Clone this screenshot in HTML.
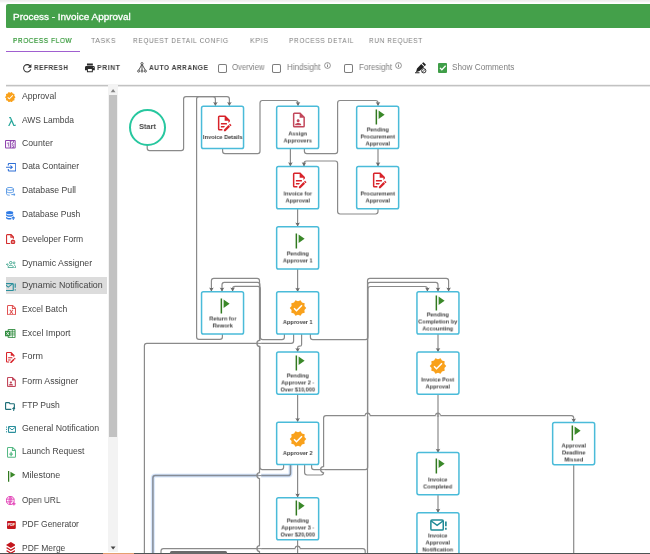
<!DOCTYPE html>
<html lang="en"><head><meta charset="utf-8"><title>Process - Invoice Approval</title>
<style>
html,body{margin:0;padding:0}
body{width:650px;height:554px;overflow:hidden;background:#fff;position:relative;font-family:"Liberation Sans",sans-serif}
.t{position:absolute;white-space:nowrap;transform-origin:0 50%;will-change:transform}
.ic{position:absolute;overflow:visible}
.topband{position:absolute;left:0;top:0;width:650px;height:3px;background:linear-gradient(#ececec,#f3f3f3 60%,#fff)}
.green{position:absolute;left:5.600px;top:4.200px;width:650px;height:23.600px;background:#44a04a;border-top-left-radius:2px;border-bottom-left-radius:1px}
.ul{position:absolute;left:5.800px;top:50.900px;width:74.400px;height:1.100px;background:#a05fd0}
.cb{position:absolute;width:6.900px;height:6.900px;box-shadow:0 0 0 1px #7d7d7d;border-radius:0.800px;background:#fff;margin:1px}
.cbg{position:absolute;width:9.400px;height:9.400px;background:#3f9e48;border-radius:1px}
.cbg svg{display:block}
.shadow{position:absolute;left:5.800px;top:83.500px;width:650px;height:3.200px;background:linear-gradient(rgba(0,0,0,0),rgba(0,0,0,.10) 35%,rgba(0,0,0,.35) 62%,rgba(0,0,0,.12) 80%,rgba(0,0,0,0))}
.side{position:absolute;left:0;top:0;width:120px;height:554px}
.hl{position:absolute;left:5.800px;top:276.800px;width:101.600px;height:17.600px;background:#dcdcdc}
.sbtrack{position:absolute;left:108.100px;top:83.800px;width:10.300px;height:468.200px;background:#f3f3f3}
.sbthumb{position:absolute;left:109px;top:95px;width:8.200px;height:341.500px;background:#c2c2c2}

.dg{position:absolute;left:0;top:0}
.node{position:absolute;width:43.500px;height:43.700px}
.node svg{position:absolute;left:12.750px;overflow:visible}
.lbl{position:absolute;left:-10px;width:63.500px;font-size:6.250px;line-height:6.900px;font-weight:700;color:#404040;text-align:center;white-space:nowrap;transform:scaleX(.9);will-change:transform}
.start{position:absolute;box-sizing:border-box;left:128.500px;top:108.700px;width:37.200px;height:37.200px;border:2.100px solid #27c79f;border-radius:50%;background:#fff}
.hthumb{position:absolute;left:170px;top:551.200px;width:57px;height:3px;background:#6a6a6a;border-radius:1.500px 1.500px 0 0}
.bline{position:absolute;left:0;top:552.800px;width:650px;height:1.200px;background:#4e5454}
.borange{position:absolute;left:103px;top:552.800px;width:30.500px;height:1.200px;background:#e5a070}
</style></head><body>
<svg class="dg" width="650" height="554" viewBox="0 0 650 554"><path d="M147.20 145.00 L147.20 148.20 Q147.20 150.60 149.60 150.60 L181.20 150.60 Q183.60 150.60 183.60 148.20 L183.60 99.10 Q183.60 96.70 186.00 96.70 L227.00 96.70 Q229.40 96.70 229.40 99.10 L229.40 105.60" fill="none" stroke="#8a8a8a" stroke-width="1.20"/>
<path d="M229.40 106.00 l-2.300 -4.100 q2.300 1.100 4.600 0z" fill="#6c6c6c"/>
<path d="M222.40 334.00 L222.40 337.00 Q222.40 339.40 220.00 339.40 L199.00 339.40 Q196.60 339.40 196.60 337.00 L196.60 99.10 Q196.60 96.70 199.00 96.70 L213.00 96.70 Q215.40 96.70 215.40 99.10 L215.40 105.60" fill="none" stroke="#8a8a8a" stroke-width="1.20"/>
<path d="M215.40 106.00 l-2.300 -4.100 q2.300 1.100 4.600 0z" fill="#6c6c6c"/>
<path d="M222.60 148.40 L222.60 151.20 Q222.60 153.60 225.00 153.60 L257.60 153.60 Q260.00 153.60 260.00 151.20 L260.00 102.90 Q260.00 100.50 262.40 100.50 L295.60 100.50 Q298.00 100.50 298.00 102.90 L298.00 105.60" fill="none" stroke="#8a8a8a" stroke-width="1.20"/>
<path d="M298.00 106.00 l-2.300 -4.100 q2.300 1.100 4.600 0z" fill="#6c6c6c"/>
<path d="M290.40 148.40 L290.40 166.00" fill="none" stroke="#8a8a8a" stroke-width="1.20"/>
<path d="M290.40 166.40 l-2.300 -4.100 q2.300 1.100 4.600 0z" fill="#6c6c6c"/>
<path d="M304.40 148.40 L304.40 151.20 Q304.40 153.60 306.80 153.60 L335.20 153.60 Q337.60 153.60 337.60 151.20 L337.60 102.90 Q337.60 100.50 340.00 100.50 L375.60 100.50 Q378.00 100.50 378.00 102.90 L378.00 105.60" fill="none" stroke="#8a8a8a" stroke-width="1.20"/>
<path d="M378.00 106.00 l-2.300 -4.100 q2.300 1.100 4.600 0z" fill="#6c6c6c"/>
<path d="M378.00 148.40 L378.00 166.00" fill="none" stroke="#8a8a8a" stroke-width="1.20"/>
<path d="M378.00 166.40 l-2.300 -4.100 q2.300 1.100 4.600 0z" fill="#6c6c6c"/>
<path d="M378.00 208.40 L378.00 211.60 Q378.00 214.00 375.60 214.00 L340.00 214.00 Q337.60 214.00 337.60 211.60 L337.60 163.40 Q337.60 161.00 335.20 161.00 L306.40 161.00 Q304.00 161.00 304.00 163.40 L304.00 166.00" fill="none" stroke="#8a8a8a" stroke-width="1.20"/>
<path d="M304.00 166.40 l-2.300 -4.100 q2.300 1.100 4.600 0z" fill="#6c6c6c"/>
<path d="M297.60 208.40 L297.60 226.20" fill="none" stroke="#8a8a8a" stroke-width="1.20"/>
<path d="M297.60 226.60 l-2.300 -4.100 q2.300 1.100 4.600 0z" fill="#6c6c6c"/>
<path d="M297.60 268.80 L297.60 291.50" fill="none" stroke="#8a8a8a" stroke-width="1.20"/>
<path d="M297.60 291.90 l-2.300 -4.100 q2.300 1.100 4.600 0z" fill="#6c6c6c"/>
<path d="M293.60 334.00 L293.60 341.00 Q293.60 343.40 291.20 343.40 L146.80 343.40 Q144.40 343.40 144.40 345.80 L144.40 560.00" fill="none" stroke="#8a8a8a" stroke-width="1.20"/>
<path d="M290.50 464.00 L290.50 473.20 Q290.50 475.60 288.10 475.60 L155.30 475.60 Q152.90 475.60 152.90 478.00 L152.90 560.00" fill="none" stroke="#e4eefc" stroke-width="4.400"/>
<path d="M290.50 464.00 L290.50 473.20 Q290.50 475.60 288.10 475.60 L155.30 475.60 Q152.90 475.60 152.90 478.00 L152.90 560.00" fill="none" stroke="#cfe0f9" stroke-width="3"/>
<path d="M290.50 464.00 L290.50 473.20 Q290.50 475.60 288.10 475.60 L155.30 475.60 Q152.90 475.60 152.90 478.00 L152.90 560.00" fill="none" stroke="#868c95" stroke-width="1.50"/>
<path d="M161.00 560.00 L161.00 551.00 Q161.00 548.60 163.40 548.60 L362.80 548.60 Q365.20 548.60 365.20 551.00 L365.20 560.00" fill="none" stroke="#8a8a8a" stroke-width="1.20"/>
<path d="M284.40 334.00 L284.40 337.20 Q284.40 339.60 282.00 339.60 L262.70 339.60 Q260.30 339.60 260.30 337.20 L260.30 288.80 Q260.30 286.40 257.90 286.40 L235.00 286.40 Q232.60 286.40 232.60 288.80 L232.60 291.20" fill="none" stroke="#8a8a8a" stroke-width="1.20"/>
<path d="M232.60 291.60 l-2.300 -4.100 q2.300 1.100 4.600 0z" fill="#6c6c6c"/>
<path d="M283.60 464.00 L283.60 467.20 Q283.60 469.60 281.20 469.60 L262.30 469.60 Q259.90 469.60 259.90 467.20 L259.90 284.80 Q259.90 282.40 257.50 282.40 L224.40 282.40 Q222.00 282.40 222.00 284.80 L222.00 291.20" fill="none" stroke="#8a8a8a" stroke-width="1.20"/>
<path d="M222.00 291.60 l-2.300 -4.100 q2.300 1.100 4.600 0z" fill="#6c6c6c"/>
<path d="M259.50 560.00 L259.50 280.80 Q259.50 278.40 257.10 278.40 L213.80 278.40 Q211.40 278.40 211.40 280.80 L211.40 291.20" fill="none" stroke="#8a8a8a" stroke-width="1.20"/>
<path d="M211.40 291.60 l-2.300 -4.100 q2.300 1.100 4.600 0z" fill="#6c6c6c"/>
<rect x="258.60" y="340.70" width="2.600" height="5.400" fill="#fff"/>
<path d="M258.30 343.40 h3.200" fill="none" stroke="#8a8a8a" stroke-width="1.050"/>
<path d="M259.90 340.40 a3 3 0 0 0 0 6" fill="none" stroke="#8a8a8a" stroke-width="1.300"/>
<rect x="258.60" y="472.90" width="2.600" height="5.400" fill="#fff"/>
<path d="M258.30 475.60 h3.200" fill="none" stroke="#868c95" stroke-width="1.050"/>
<path d="M259.90 472.60 a3 3 0 0 0 0 6" fill="none" stroke="#8a8a8a" stroke-width="1.300"/>
<rect x="258.60" y="545.90" width="2.600" height="5.400" fill="#fff"/>
<path d="M258.30 548.60 h3.200" fill="none" stroke="#8a8a8a" stroke-width="1.050"/>
<path d="M259.90 545.60 a3 3 0 0 0 0 6" fill="none" stroke="#8a8a8a" stroke-width="1.300"/>
<path d="M301.60 334.00 L301.60 344.40 Q301.60 346.20 299.80 346.20 L299.40 346.20 Q297.60 346.20 297.60 348.00 L297.60 351.60" fill="none" stroke="#8a8a8a" stroke-width="1.20"/>
<path d="M297.60 352.00 l-2.300 -4.100 q2.300 1.100 4.600 0z" fill="#6c6c6c"/>
<path d="M310.40 334.00 L310.40 337.20 Q310.40 339.60 312.80 339.60 L365.50 339.60 Q367.90 339.60 367.90 337.20 L367.90 288.90 Q367.90 286.50 370.30 286.50 L425.05 286.50 Q427.40 286.50 427.40 288.85 L427.40 291.20" fill="none" stroke="#8a8a8a" stroke-width="1.20"/>
<path d="M427.40 291.60 l-2.300 -4.100 q2.300 1.100 4.600 0z" fill="#6c6c6c"/>
<path d="M297.60 394.60 L297.60 421.60" fill="none" stroke="#8a8a8a" stroke-width="1.20"/>
<path d="M297.60 422.00 l-2.300 -4.100 q2.300 1.100 4.600 0z" fill="#6c6c6c"/>
<path d="M297.60 464.00 L297.60 497.20" fill="none" stroke="#8a8a8a" stroke-width="1.20"/>
<path d="M297.60 497.60 l-2.300 -4.100 q2.300 1.100 4.600 0z" fill="#6c6c6c"/>
<path d="M297.60 539.40 L297.60 560.00" fill="none" stroke="#8a8a8a" stroke-width="1.20"/>
<rect x="295.20" y="547.60" width="4.800" height="2" fill="#fff"/>
<path d="M295.20 548.60 a2.400 2.400 0 0 1 4.800 0" fill="none" stroke="#8a8a8a" stroke-width="1.200"/>
<path d="M297.60 546.10 v4" fill="none" stroke="#8a8a8a" stroke-width="1.050"/>
<path d="M311.60 464.00 L311.60 467.20 Q311.60 469.60 314.00 469.60 L365.30 469.60 Q367.70 469.60 367.70 467.20 L367.70 284.80 Q367.70 282.40 370.10 282.40 L435.60 282.40 Q438.00 282.40 438.00 284.80 L438.00 291.20" fill="none" stroke="#8a8a8a" stroke-width="1.20"/>
<path d="M438.00 291.60 l-2.300 -4.100 q2.300 1.100 4.600 0z" fill="#6c6c6c"/>
<path d="M367.50 560.00 L367.50 280.80 Q367.50 278.40 369.90 278.40 L446.20 278.40 Q448.60 278.40 448.60 280.80 L448.60 291.20" fill="none" stroke="#8a8a8a" stroke-width="1.20"/>
<path d="M448.60 291.60 l-2.300 -4.100 q2.300 1.100 4.600 0z" fill="#6c6c6c"/>
<path d="M304.60 464.00 L304.60 472.60 Q304.60 475.00 307.00 475.00 L321.20 475.00 Q323.60 475.00 323.60 472.60 L323.60 418.00 Q323.60 415.60 326.00 415.60 L571.30 415.60 Q573.70 415.60 573.70 418.00 L573.70 422.20" fill="none" stroke="#8a8a8a" stroke-width="1.20"/>
<path d="M573.70 422.60 l-2.300 -4.100 q2.300 1.100 4.600 0z" fill="#6c6c6c"/>
<rect x="322.30" y="466.90" width="2.600" height="5.400" fill="#fff"/>
<path d="M322.00 469.60 h3.200" fill="none" stroke="#8a8a8a" stroke-width="1.050"/>
<path d="M323.60 466.60 a3 3 0 0 0 0 6" fill="none" stroke="#8a8a8a" stroke-width="1.300"/>
<rect x="365.20" y="414.60" width="4.800" height="2" fill="#fff"/>
<path d="M365.20 415.60 a2.400 2.400 0 0 1 4.800 0" fill="none" stroke="#8a8a8a" stroke-width="1.200"/>
<path d="M367.60 413.10 v4" fill="none" stroke="#8a8a8a" stroke-width="1.050"/>
<rect x="435.60" y="414.60" width="4.800" height="2" fill="#fff"/>
<path d="M435.60 415.60 a2.400 2.400 0 0 1 4.800 0" fill="none" stroke="#8a8a8a" stroke-width="1.200"/>
<path d="M438.00 413.10 v4" fill="none" stroke="#8a8a8a" stroke-width="1.050"/>
<path d="M438.00 334.00 L438.00 351.60" fill="none" stroke="#8a8a8a" stroke-width="1.20"/>
<path d="M438.00 352.00 l-2.300 -4.100 q2.300 1.100 4.600 0z" fill="#6c6c6c"/>
<path d="M438.00 394.20 L438.00 452.40" fill="none" stroke="#8a8a8a" stroke-width="1.20"/>
<path d="M438.00 452.80 l-2.300 -4.100 q2.300 1.100 4.600 0z" fill="#6c6c6c"/>
<path d="M438.00 494.60 L438.00 512.40" fill="none" stroke="#8a8a8a" stroke-width="1.20"/>
<path d="M438.00 512.80 l-2.300 -4.100 q2.300 1.100 4.600 0z" fill="#6c6c6c"/>
<path d="M573.70 464.40 L573.70 560.00" fill="none" stroke="#8a8a8a" stroke-width="1.20"/>
<rect x="201.55" y="106.35" width="42.00" height="42.20" rx="1.800" fill="#fff" stroke="#4abbd9" stroke-width="1.50"/>
<rect x="276.65" y="106.35" width="42.00" height="42.20" rx="1.800" fill="#fff" stroke="#4abbd9" stroke-width="1.50"/>
<rect x="356.65" y="106.35" width="42.00" height="42.20" rx="1.800" fill="#fff" stroke="#4abbd9" stroke-width="1.50"/>
<rect x="276.65" y="166.55" width="42.00" height="42.20" rx="1.800" fill="#fff" stroke="#4abbd9" stroke-width="1.50"/>
<rect x="356.65" y="166.55" width="42.00" height="42.20" rx="1.800" fill="#fff" stroke="#4abbd9" stroke-width="1.50"/>
<rect x="276.65" y="226.75" width="42.00" height="42.20" rx="1.800" fill="#fff" stroke="#4abbd9" stroke-width="1.50"/>
<rect x="201.55" y="291.75" width="42.00" height="42.20" rx="1.800" fill="#fff" stroke="#4abbd9" stroke-width="1.50"/>
<rect x="276.65" y="291.75" width="42.00" height="42.20" rx="1.800" fill="#fff" stroke="#4abbd9" stroke-width="1.50"/>
<rect x="416.95" y="291.75" width="42.00" height="42.20" rx="1.800" fill="#fff" stroke="#4abbd9" stroke-width="1.50"/>
<rect x="276.65" y="351.95" width="42.00" height="42.20" rx="1.800" fill="#fff" stroke="#4abbd9" stroke-width="1.50"/>
<rect x="416.95" y="351.95" width="42.00" height="42.20" rx="1.800" fill="#fff" stroke="#4abbd9" stroke-width="1.50"/>
<rect x="276.65" y="422.25" width="42.00" height="42.20" rx="1.800" fill="#fff" stroke="#4abbd9" stroke-width="1.50"/>
<rect x="552.65" y="422.45" width="42.00" height="42.20" rx="1.800" fill="#fff" stroke="#4abbd9" stroke-width="1.50"/>
<rect x="416.95" y="452.45" width="42.00" height="42.20" rx="1.800" fill="#fff" stroke="#4abbd9" stroke-width="1.50"/>
<rect x="276.65" y="497.65" width="42.00" height="42.20" rx="1.800" fill="#fff" stroke="#4abbd9" stroke-width="1.50"/>
<rect x="416.95" y="512.75" width="42.00" height="42.20" rx="1.800" fill="#fff" stroke="#4abbd9" stroke-width="1.50"/></svg>
<div class="node" style="left:200.80px;top:105.60px"><svg style="top:8.40px" width="18" height="18" viewBox="0 0 24 24"><g transform="translate(1.2 0)"><path fill="#d8232a" d="M8,12H16V14H8V12M10,20H6V4H13V9H18V12.1L20,10.1V8L14,2H6A2,2 0 0,0 4,4V20A2,2 0 0,0 6,22H10V20M8,18H12.1L13,17.1V16H8V18M20.2,13C20.3,13 20.5,13.1 20.6,13.2L21.9,14.5C22.1,14.7 22.1,15.1 21.9,15.3L20.9,16.3L18.8,14.2L19.8,13.2C19.9,13.1 20,13 20.2,13M20.2,16.9L14.1,23H12V20.9L18.1,14.8L20.2,16.9Z"/></g></svg><div class="lbl" style="top:28.45px">Invoice Details</div></div>
<div class="node" style="left:275.90px;top:105.60px"><svg style="top:5.60px" width="18" height="18" viewBox="0 0 24 24"><g transform="translate(1.2 0)"><path fill="#c2475b" d="M14,2H6A2,2 0 0,0 4,4V20A2,2 0 0,0 6,22H18A2,2 0 0,0 20,20V8L14,2M18,20H6V4H13V9H18V20M13,13C13,14.1 12.1,15 11,15C9.9,15 9,14.1 9,13C9,11.9 9.9,11 11,11C12.1,11 13,11.9 13,13M15,18V19H7V18C7,16.67 9.67,16 11,16C12.33,16 15,16.67 15,18Z"/></g></svg><div class="lbl" style="top:24.40px;transform:translateY(0.5px) scaleX(.9)">Assign<br>Approvers</div></div>
<div class="node" style="left:355.90px;top:105.60px"><svg style="top:2.50px" width="18" height="18" viewBox="0 0 24 24"><g transform="translate(1.800 0)"><path fill="#31791f" d="M7,2H9V22H7V2Z"/><path fill="#3a8829" d="M19,9L11,14.6V3.4L19,9Z"/></g></svg><div class="lbl" style="top:21.35px;transform:translateY(-0.5px) scaleX(.9)">Pending<br>Procurement<br>Approval</div></div>
<div class="node" style="left:275.90px;top:165.80px"><svg style="top:5.60px" width="18" height="18" viewBox="0 0 24 24"><g transform="translate(1.2 0)"><path fill="#d8232a" d="M8,12H16V14H8V12M10,20H6V4H13V9H18V12.1L20,10.1V8L14,2H6A2,2 0 0,0 4,4V20A2,2 0 0,0 6,22H10V20M8,18H12.1L13,17.1V16H8V18M20.2,13C20.3,13 20.5,13.1 20.6,13.2L21.9,14.5C22.1,14.7 22.1,15.1 21.9,15.3L20.9,16.3L18.8,14.2L19.8,13.2C19.9,13.1 20,13 20.2,13M20.2,16.9L14.1,23H12V20.9L18.1,14.8L20.2,16.9Z"/></g></svg><div class="lbl" style="top:24.40px;transform:translateY(0.5px) scaleX(.9)">Invoice for<br>Approval</div></div>
<div class="node" style="left:355.90px;top:165.80px"><svg style="top:5.60px" width="18" height="18" viewBox="0 0 24 24"><g transform="translate(1.2 0)"><path fill="#d8232a" d="M8,12H16V14H8V12M10,20H6V4H13V9H18V12.1L20,10.1V8L14,2H6A2,2 0 0,0 4,4V20A2,2 0 0,0 6,22H10V20M8,18H12.1L13,17.1V16H8V18M20.2,13C20.3,13 20.5,13.1 20.6,13.2L21.9,14.5C22.1,14.7 22.1,15.1 21.9,15.3L20.9,16.3L18.8,14.2L19.8,13.2C19.9,13.1 20,13 20.2,13M20.2,16.9L14.1,23H12V20.9L18.1,14.8L20.2,16.9Z"/></g></svg><div class="lbl" style="top:24.40px;transform:translateY(0.5px) scaleX(.9)">Procurement<br>Approval</div></div>
<div class="node" style="left:275.90px;top:226.00px"><svg style="top:5.60px" width="18" height="18" viewBox="0 0 24 24"><g transform="translate(1.800 0)"><path fill="#31791f" d="M7,2H9V22H7V2Z"/><path fill="#3a8829" d="M19,9L11,14.6V3.4L19,9Z"/></g></svg><div class="lbl" style="top:24.40px;transform:translateY(0.5px) scaleX(.9)">Pending<br>Approver 1</div></div>
<div class="node" style="left:200.80px;top:291.00px"><svg style="top:5.60px" width="18" height="18" viewBox="0 0 24 24"><g transform="translate(1.800 0)"><path fill="#31791f" d="M7,2H9V22H7V2Z"/><path fill="#3a8829" d="M19,9L11,14.6V3.4L19,9Z"/></g></svg><div class="lbl" style="top:24.40px;transform:translateY(0.5px) scaleX(.9)">Return for<br>Rework</div></div>
<div class="node" style="left:275.90px;top:291.00px"><svg style="top:8.40px" width="18" height="18" viewBox="0 0 24 24"><path fill="#f9a11b" d="M23,12L20.56,9.22L20.9,5.54L17.29,4.72L15.4,1.54L12,3L8.6,1.54L6.71,4.72L3.1,5.53L3.44,9.21L1,12L3.44,14.78L3.1,18.47L6.71,19.29L8.6,22.47L12,21L15.4,22.46L17.29,19.28L20.9,18.46L20.56,14.78L23,12M10,17L6,13L7.41,11.59L10,14.17L16.59,7.58L18,9L10,17Z"/></svg><div class="lbl" style="top:28.45px">Approver 1</div></div>
<div class="node" style="left:416.20px;top:291.00px"><svg style="top:2.50px" width="18" height="18" viewBox="0 0 24 24"><g transform="translate(1.800 0)"><path fill="#31791f" d="M7,2H9V22H7V2Z"/><path fill="#3a8829" d="M19,9L11,14.6V3.4L19,9Z"/></g></svg><div class="lbl" style="top:21.35px;transform:translateY(-0.5px) scaleX(.9)">Pending<br>Completion by<br>Accounting</div></div>
<div class="node" style="left:275.90px;top:351.20px"><svg style="top:2.50px" width="18" height="18" viewBox="0 0 24 24"><g transform="translate(1.800 0)"><path fill="#31791f" d="M7,2H9V22H7V2Z"/><path fill="#3a8829" d="M19,9L11,14.6V3.4L19,9Z"/></g></svg><div class="lbl" style="top:21.35px;transform:translateY(-0.5px) scaleX(.9)">Pending<br>Approver 2 -<br>Over $10,000</div></div>
<div class="node" style="left:416.20px;top:351.20px"><svg style="top:5.60px" width="18" height="18" viewBox="0 0 24 24"><path fill="#f9a11b" d="M23,12L20.56,9.22L20.9,5.54L17.29,4.72L15.4,1.54L12,3L8.6,1.54L6.71,4.72L3.1,5.53L3.44,9.21L1,12L3.44,14.78L3.1,18.47L6.71,19.29L8.6,22.47L12,21L15.4,22.46L17.29,19.28L20.9,18.46L20.56,14.78L23,12M10,17L6,13L7.41,11.59L10,14.17L16.59,7.58L18,9L10,17Z"/></svg><div class="lbl" style="top:24.40px;transform:translateY(0.5px) scaleX(.9)">Invoice Post<br>Approval</div></div>
<div class="node" style="left:275.90px;top:421.50px"><svg style="top:8.40px" width="18" height="18" viewBox="0 0 24 24"><path fill="#f9a11b" d="M23,12L20.56,9.22L20.9,5.54L17.29,4.72L15.4,1.54L12,3L8.6,1.54L6.71,4.72L3.1,5.53L3.44,9.21L1,12L3.44,14.78L3.1,18.47L6.71,19.29L8.6,22.47L12,21L15.4,22.46L17.29,19.28L20.9,18.46L20.56,14.78L23,12M10,17L6,13L7.41,11.59L10,14.17L16.59,7.58L18,9L10,17Z"/></svg><div class="lbl" style="top:28.45px">Approver 2</div></div>
<div class="node" style="left:551.90px;top:421.70px"><svg style="top:2.50px" width="18" height="18" viewBox="0 0 24 24"><g transform="translate(1.800 0)"><path fill="#31791f" d="M7,2H9V22H7V2Z"/><path fill="#3a8829" d="M19,9L11,14.6V3.4L19,9Z"/></g></svg><div class="lbl" style="top:21.35px;transform:translateY(-0.5px) scaleX(.9)">Approval<br>Deadline<br>Missed</div></div>
<div class="node" style="left:416.20px;top:451.70px"><svg style="top:5.60px" width="18" height="18" viewBox="0 0 24 24"><g transform="translate(1.800 0)"><path fill="#31791f" d="M7,2H9V22H7V2Z"/><path fill="#3a8829" d="M19,9L11,14.6V3.4L19,9Z"/></g></svg><div class="lbl" style="top:24.40px;transform:translateY(0.5px) scaleX(.9)">Invoice<br>Completed</div></div>
<div class="node" style="left:275.90px;top:496.90px"><svg style="top:2.50px" width="18" height="18" viewBox="0 0 24 24"><g transform="translate(1.800 0)"><path fill="#31791f" d="M7,2H9V22H7V2Z"/><path fill="#3a8829" d="M19,9L11,14.6V3.4L19,9Z"/></g></svg><div class="lbl" style="top:21.35px;transform:translateY(-0.5px) scaleX(.9)">Pending<br>Approver 3 -<br>Over $20,000</div></div>
<div class="node" style="left:416.20px;top:512.00px"><svg style="top:2.50px" width="18" height="18" viewBox="0 0 24 24"><rect x="2.500" y="6.500" width="16.500" height="13.500" rx="1.500" fill="none" stroke="#1f8a96" stroke-width="2"/><path d="M3 8l7.800 5.800 7.800-5.800" fill="none" stroke="#1f8a96" stroke-width="2"/><path d="M22.500 8.500v6.500M22.500 17v2.600" stroke="#1f8a96" stroke-width="2.200"/></svg><div class="lbl" style="top:21.35px;transform:translateY(-0.5px) scaleX(.9)">Invoice<br>Approval<br>Notification</div></div>
<div class="start"></div>
<span class="t" style="left:138.80px;top:121.60px;font-size:8.00px;line-height:9.60px;font-weight:700;color:#484848;letter-spacing:0.000px;transform:scaleX(0.9272);">Start</span>
<div class="side">
<div class="hl"></div>
<svg class="ic" style="left:5.30px;top:92.00px;overflow:hidden" width="10.50" height="10.30" viewBox="1.00 1.54 22.00 20.93" preserveAspectRatio="none"><path fill="#f9a11b" d="M23,12L20.56,9.22L20.9,5.54L17.29,4.72L15.4,1.54L12,3L8.6,1.54L6.71,4.72L3.1,5.53L3.44,9.21L1,12L3.44,14.78L3.1,18.47L6.71,19.29L8.6,22.47L12,21L15.4,22.46L17.29,19.28L20.9,18.46L20.56,14.78L23,12M10,17L6,13L7.41,11.59L10,14.17L16.59,7.58L18,9L10,17Z"/></svg>
<span class="t" style="left:21.95px;top:90.96px;font-size:8.40px;line-height:10.08px;font-weight:400;color:#454545;letter-spacing:0.000px;transform:scaleX(1.0330);">Approval</span>
<svg class="ic" style="left:7.80px;top:116.60px;overflow:hidden" width="8.00" height="9.40" viewBox="2.60 3.50 16.10 18.80" preserveAspectRatio="none"><path d="M5 3.5h3.2l7.2 15.8 2.600-.9.700 2.200-4.800 1.700-4.300-9.400-4.400 9.200H2.600l5.600-11.700L7 6H5z" fill="#26a69a"/></svg>
<span class="t" style="left:21.95px;top:114.96px;font-size:8.40px;line-height:10.08px;font-weight:400;color:#454545;letter-spacing:0.000px;transform:scaleX(1.0124);">AWS Lambda</span>
<svg class="ic" style="left:5.30px;top:140.20px;overflow:hidden" width="10.70" height="8.60" viewBox="2.00 4.00 20.00 16.00" preserveAspectRatio="none"><path fill="#8e44ad" d="M4,4H20A2,2 0 0,1 22,6V18A2,2 0 0,1 20,20H4A2,2 0 0,1 2,18V6A2,2 0 0,1 4,4M4,6V18H11V6H4M20,18V6H18.76C19,6.54 18.95,7.07 18.95,7.13C18.88,7.8 18.41,8.5 18.24,8.75L15.91,11.3L19.23,11.28L19.24,12.5L14.04,12.47L14,11.47C14,11.47 17.05,8.24 17.2,7.95C17.34,7.67 17.91,6 16.5,6C15.27,6.05 15.41,7.3 15.41,7.3L13.87,7.31C13.87,7.31 13.88,6.65 14.25,6H13V18H15.58L15.57,17.14L16.54,17.13C16.54,17.13 17.45,16.97 17.46,16.08C17.5,15.08 16.65,15.08 16.5,15.08C16.37,15.08 15.43,15.13 15.43,15.95H13.91C13.91,15.95 13.95,13.89 16.5,13.89C19.1,13.89 18.96,15.91 18.96,15.91C18.96,15.91 19,17.16 17.85,17.63L18.37,18H20M8.92,16H7.42V10.2L5.62,10.76V9.53L8.76,8.41H8.92V16Z"/></svg>
<span class="t" style="left:21.95px;top:137.96px;font-size:8.40px;line-height:10.08px;font-weight:400;color:#454545;letter-spacing:0.000px;transform:scaleX(1.0356);">Counter</span>
<svg class="ic" style="left:5.70px;top:163.20px;overflow:hidden" width="10.30" height="8.50" viewBox="1.00 2.30 22.20 19.40" preserveAspectRatio="none"><path d="M6 8V5a1.500 1.500 0 0 1 1.500-1.500h13A1.500 1.500 0 0 1 22 5v14a1.500 1.500 0 0 1-1.500 1.500h-13A1.500 1.500 0 0 1 6 19v-3" fill="none" stroke="#2f6fd6" stroke-width="2.400"/><path d="M1 12h13M10.500 8l4 4-4 4" fill="none" stroke="#2f6fd6" stroke-width="2.400"/></svg>
<span class="t" style="left:21.95px;top:160.96px;font-size:8.40px;line-height:10.08px;font-weight:400;color:#454545;letter-spacing:0.000px;transform:scaleX(1.0150);">Data Container</span>
<svg class="ic" style="left:6.30px;top:186.60px;overflow:hidden" width="9.50" height="9.10" viewBox="2.50 1.50 20.50 22.20" preserveAspectRatio="none"><ellipse cx="11" cy="6" rx="7.500" ry="3.500" fill="none" stroke="#4a90e2" stroke-width="2"/><path d="M3.500 6v12c0 2 3 3.500 7 3.500M18.500 6v7M3.500 12c0 2 3.500 3.500 7.500 3.500s5-.5 7.500-2" fill="none" stroke="#4a90e2" stroke-width="2"/><path d="M14 20h8M19 17l3 3-3 3" fill="none" stroke="#4a90e2" stroke-width="2"/></svg>
<span class="t" style="left:21.95px;top:184.96px;font-size:8.40px;line-height:10.08px;font-weight:400;color:#454545;letter-spacing:0.000px;transform:scaleX(1.0354);">Database Pull</span>
<svg class="ic" style="left:6.30px;top:210.60px;overflow:hidden" width="9.20" height="9.40" viewBox="2.50 1.50 21.50 22.50" preserveAspectRatio="none"><ellipse cx="11" cy="5.500" rx="8.500" ry="4" fill="#2f7be5"/><path d="M2.500 8.500c1.500 2 5 3 8.500 3s7-1 8.500-3v4c-1.500 2-5 3-8.500 3s-7-1-8.500-3zM2.500 15c1.500 2 5 3 8.500 3 1.500 0 3-.2 4-.5v4c-1 .3-2.500.5-4 .5-3.500 0-7-1-8.500-3z" fill="#2f7be5"/><path d="M19.500 24v-8M16 19l3.500-3.500L23 19" fill="none" stroke="#2f7be5" stroke-width="2.400"/></svg>
<span class="t" style="left:21.95px;top:208.96px;font-size:8.40px;line-height:10.08px;font-weight:400;color:#454545;letter-spacing:0.000px;transform:scaleX(1.0176);">Database Push</span>
<svg class="ic" style="left:6.30px;top:233.60px;overflow:hidden" width="9.50" height="10.60" viewBox="2.80 1.30 20.70 22.20" preserveAspectRatio="none"><path d="M12 21.500H5.500A1.500 1.500 0 0 1 4 20V4a1.500 1.500 0 0 1 1.500-1.500H14l5 5V11M13.500 3v5h5" fill="none" stroke="#d32f2f" stroke-width="2.400"/><circle cx="18" cy="18" r="3.200" fill="none" stroke="#d32f2f" stroke-width="2.600"/><path d="M18 12.500v11M12.500 18h11M14 14l8 8M22 14l-8 8" stroke="#d32f2f" stroke-width="1.600"/><circle cx="18" cy="18" r="1.500" fill="#fff"/></svg>
<span class="t" style="left:21.95px;top:233.96px;font-size:8.40px;line-height:10.08px;font-weight:400;color:#454545;letter-spacing:0.000px;transform:scaleX(1.0187);">Developer Form</span>
<svg class="ic" style="left:5.70px;top:261.00px;overflow:hidden" width="10.10" height="7.00" viewBox="0.00 4.00 24.50 17.00" preserveAspectRatio="none"><circle cx="11.500" cy="8" r="3" fill="none" stroke="#2e9e83" stroke-width="2"/><circle cx="19.500" cy="8.500" r="2.300" fill="none" stroke="#2e9e83" stroke-width="1.800"/><path d="M5 20c0-4 3-5.500 6.500-5.500s6.500 1.500 6.500 5.500zM19.500 14c2.500.3 4 1.800 4 5.800h-3" fill="none" stroke="#2e9e83" stroke-width="2"/><path d="M0 12.500h4M2.500 9.500l3 3-3 3" stroke="#2e9e83" stroke-width="1.800" fill="none"/></svg>
<span class="t" style="left:21.95px;top:257.96px;font-size:8.40px;line-height:10.08px;font-weight:400;color:#454545;letter-spacing:0.000px;transform:scaleX(1.0465);">Dynamic Assigner</span>
<svg class="ic" style="left:6.00px;top:282.50px;overflow:hidden" width="9.80" height="8.20" viewBox="0.00 3.70 22.30 17.60" preserveAspectRatio="none"><path d="M-4 5h19a1.500 1.500 0 0 1 1.500 1.500v12A1.500 1.500 0 0 1 15 20H-4" fill="none" stroke="#2a8f9c" stroke-width="2.600"/><path d="M-4 5.500l9 7 10-7" fill="none" stroke="#2a8f9c" stroke-width="2.400"/><path d="M21 5v9M21 17v3" stroke="#2a8f9c" stroke-width="2.600"/></svg>
<span class="t" style="left:21.95px;top:279.96px;font-size:8.40px;line-height:10.08px;font-weight:400;color:#454545;letter-spacing:0.000px;transform:scaleX(1.0573);">Dynamic Notification</span>
<svg class="ic" style="left:7.00px;top:304.50px;overflow:hidden" width="9.00" height="10.30" viewBox="3.00 1.50 17.50 21.00" preserveAspectRatio="none"><path d="M5.500 2.500H14l5.500 5.500v12a1.500 1.500 0 0 1-1.500 1.500H5.500A1.500 1.500 0 0 1 4 20V4a1.500 1.500 0 0 1 1.500-1.500zM13.500 3v5.500h5.500" fill="none" stroke="#e05252" stroke-width="2"/><path d="M8.500 11l6 9M14.500 11l-6 9" stroke="#e05252" stroke-width="2"/></svg>
<span class="t" style="left:21.95px;top:303.96px;font-size:8.40px;line-height:10.08px;font-weight:400;color:#454545;letter-spacing:0.000px;transform:scaleX(1.0247);">Excel Batch</span>
<svg class="ic" style="left:5.30px;top:328.90px;overflow:hidden" width="10.50" height="9.10" viewBox="0.00 2.00 23.00 20.00" preserveAspectRatio="none"><path d="M7 3h15v18H7z" fill="none" stroke="#2e8b3d" stroke-width="2"/><path d="M12 7h10M12 11h10M12 15h10M16 3v18" stroke="#2e8b3d" stroke-width="1.600"/><rect x="0" y="6" width="12" height="12" fill="#2e8b3d"/><path d="M3 8.500l6 7M9 8.500l-6 7" stroke="#fff" stroke-width="1.800"/></svg>
<span class="t" style="left:21.95px;top:327.96px;font-size:8.40px;line-height:10.08px;font-weight:400;color:#454545;letter-spacing:0.000px;transform:scaleX(1.0422);">Excel Import</span>
<svg class="ic" style="left:6.30px;top:351.90px;overflow:hidden" width="9.60" height="11.10" viewBox="4.00 2.00 18.05 21.00" preserveAspectRatio="none"><path fill="#d8232a" d="M8,12H16V14H8V12M10,20H6V4H13V9H18V12.1L20,10.1V8L14,2H6A2,2 0 0,0 4,4V20A2,2 0 0,0 6,22H10V20M8,18H12.1L13,17.1V16H8V18M20.2,13C20.3,13 20.5,13.1 20.6,13.2L21.9,14.5C22.1,14.7 22.1,15.1 21.9,15.3L20.9,16.3L18.8,14.2L19.8,13.2C19.9,13.1 20,13 20.2,13M20.2,16.9L14.1,23H12V20.9L18.1,14.8L20.2,16.9Z"/></svg>
<span class="t" style="left:21.95px;top:350.96px;font-size:8.40px;line-height:10.08px;font-weight:400;color:#454545;letter-spacing:0.000px;transform:scaleX(1.0690);">Form</span>
<svg class="ic" style="left:7.00px;top:376.70px;overflow:hidden" width="8.90" height="10.00" viewBox="4.00 2.00 16.00 20.00" preserveAspectRatio="none"><path fill="#c2475b" d="M14,2H6A2,2 0 0,0 4,4V20A2,2 0 0,0 6,22H18A2,2 0 0,0 20,20V8L14,2M18,20H6V4H13V9H18V20M13,13C13,14.1 12.1,15 11,15C9.9,15 9,14.1 9,13C9,11.9 9.9,11 11,11C12.1,11 13,11.9 13,13M15,18V19H7V18C7,16.67 9.67,16 11,16C12.33,16 15,16.67 15,18Z"/></svg>
<span class="t" style="left:21.95px;top:375.96px;font-size:8.40px;line-height:10.08px;font-weight:400;color:#454545;letter-spacing:0.000px;transform:scaleX(1.0425);">Form Assigner</span>
<svg class="ic" style="left:5.30px;top:401.60px;overflow:hidden" width="10.50" height="9.50" viewBox="-0.30 3.20 23.90 20.80" preserveAspectRatio="none"><path d="M21 19V8.500A1.500 1.500 0 0 0 19.500 7H11L9 4.500H2.500A1.500 1.500 0 0 0 1 6v12a1.500 1.500 0 0 0 1.500 1.500H14" fill="none" stroke="#1f6f78" stroke-width="2.600"/><path d="M19.500 24v-8M16.500 18.500l3-3 3 3" fill="none" stroke="#1f6f78" stroke-width="2.200"/></svg>
<span class="t" style="left:21.95px;top:399.96px;font-size:8.40px;line-height:10.08px;font-weight:400;color:#454545;letter-spacing:0.000px;transform:scaleX(1.0203);">FTP Push</span>
<svg class="ic" style="left:5.70px;top:426.30px;overflow:hidden" width="10.10" height="6.90" viewBox="0.90 4.30 22.80 15.40" preserveAspectRatio="none"><rect x="6.500" y="5.500" width="16" height="13" rx="1.500" fill="none" stroke="#2a8f9c" stroke-width="2.400"/><path d="M7 7l7.500 6L22 7" fill="none" stroke="#2a8f9c" stroke-width="2.200"/><path d="M2 5.500v2.600M2 10.700v2.600M2 15.900v2.600" stroke="#2a8f9c" stroke-width="2.200"/></svg>
<span class="t" style="left:21.95px;top:422.96px;font-size:8.40px;line-height:10.08px;font-weight:400;color:#454545;letter-spacing:0.000px;transform:scaleX(1.0485);">General Notification</span>
<svg class="ic" style="left:7.00px;top:447.00px;overflow:hidden" width="9.00" height="10.70" viewBox="3.00 1.50 17.50 21.00" preserveAspectRatio="none"><path d="M5.500 2.500H14l5.500 5.500v12a1.500 1.500 0 0 1-1.500 1.500H5.500A1.500 1.500 0 0 1 4 20V4a1.500 1.500 0 0 1 1.500-1.500zM13.500 3v5.500h5.500" fill="none" stroke="#56b985" stroke-width="2"/><path d="M7.500 15.500h7M11 11v8.500" stroke="#56b985" stroke-width="2.400"/></svg>
<span class="t" style="left:21.95px;top:445.96px;font-size:8.40px;line-height:10.08px;font-weight:400;color:#454545;letter-spacing:0.000px;transform:scaleX(1.0240);">Launch Request</span>
<svg class="ic" style="left:8.40px;top:471.00px;overflow:hidden" width="7.40" height="10.70" viewBox="7.00 2.00 12.00 20.00" preserveAspectRatio="none"><path fill="#31791f" d="M7,2H9V22H7V2Z"/><path fill="#3a8829" d="M19,9L11,14.6V3.4L19,9Z"/></svg>
<span class="t" style="left:21.95px;top:469.96px;font-size:8.40px;line-height:10.08px;font-weight:400;color:#454545;letter-spacing:0.000px;transform:scaleX(1.0695);">Milestone</span>
<svg class="ic" style="left:5.70px;top:495.60px;overflow:hidden" width="10.10" height="10.10" viewBox="0.40 0.40 23.60 22.60" preserveAspectRatio="none"><circle cx="10.500" cy="10.500" r="9" fill="none" stroke="#e23bb4" stroke-width="2.200"/><path d="M1.500 7.500h18M1.500 13.500h14M10.500 1.500c-4 3-4 15 0 18M10.500 1.500c4 3 4 9 3 12M10.500 1.500v18" fill="none" stroke="#e23bb4" stroke-width="1.800"/><path d="M19 13l1.500 3.500L24 18l-3.500 1.500L19 23l-1.500-3.500L14 18l3.500-1.500z" fill="#e23bb4"/></svg>
<span class="t" style="left:21.95px;top:494.96px;font-size:8.40px;line-height:10.08px;font-weight:400;color:#454545;letter-spacing:0.000px;transform:scaleX(0.9688);">Open URL</span>
<svg class="ic" style="left:7.00px;top:521.00px;overflow:hidden" width="8.80" height="8.00" viewBox="2.00 3.00 20.00 18.00" preserveAspectRatio="none"><rect x="2" y="3" width="20" height="18" rx="2.500" fill="#c4161c"/><text x="12" y="15.300" font-family="Liberation Sans,sans-serif" font-weight="700" font-size="8.500" fill="#fff" text-anchor="middle">PDF</text></svg>
<span class="t" style="left:21.95px;top:518.96px;font-size:8.40px;line-height:10.08px;font-weight:400;color:#454545;letter-spacing:0.000px;transform:scaleX(1.0017);">PDF Generator</span>
<svg class="ic" style="left:5.70px;top:542.00px;overflow:hidden" width="9.70" height="12.00" viewBox="1.00 0.00 22.00 24.00" preserveAspectRatio="none"><path d="M12 0l11 6-11 6L1 6z" fill="#c4161c"/><path d="M3.500 10.500L1 12l11 6 11-6-2.500-1.500L12 15zM3.500 16.500L1 18l11 6 11-6-2.500-1.500L12 21z" fill="#c4161c"/></svg>
<span class="t" style="left:21.95px;top:542.96px;font-size:8.40px;line-height:10.08px;font-weight:400;color:#454545;letter-spacing:0.000px;transform:scaleX(1.0118);">PDF Merge</span>
</div>
<div class="topband"></div>
<div class="green"></div>
<span class="t" style="left:13.24px;top:10.96px;font-size:9.40px;line-height:11.28px;font-weight:400;color:#fff;letter-spacing:0.000px;transform:scaleX(1.0615);-webkit-text-stroke:0.3px #fff;">Process - Invoice Approval</span>
<span class="t" style="left:13.13px;top:35.61px;font-size:7.90px;line-height:9.48px;font-weight:400;color:#43a047;letter-spacing:0.750px;transform:scaleX(0.8171);text-shadow:0 0 0.3px #43a047;">PROCESS FLOW</span>
<span class="t" style="left:90.53px;top:35.61px;font-size:7.90px;line-height:9.48px;font-weight:400;color:#7e7e7e;letter-spacing:0.750px;transform:scaleX(0.8669);">TASKS</span>
<span class="t" style="left:132.53px;top:35.61px;font-size:7.90px;line-height:9.48px;font-weight:400;color:#7e7e7e;letter-spacing:0.750px;transform:scaleX(0.8278);">REQUEST DETAIL CONFIG</span>
<span class="t" style="left:249.53px;top:35.61px;font-size:7.90px;line-height:9.48px;font-weight:400;color:#7e7e7e;letter-spacing:0.750px;transform:scaleX(0.8862);">KPIS</span>
<span class="t" style="left:288.73px;top:35.61px;font-size:7.90px;line-height:9.48px;font-weight:400;color:#7e7e7e;letter-spacing:0.750px;transform:scaleX(0.8287);">PROCESS DETAIL</span>
<span class="t" style="left:368.83px;top:35.61px;font-size:7.90px;line-height:9.48px;font-weight:400;color:#7e7e7e;letter-spacing:0.750px;transform:scaleX(0.8192);">RUN REQUEST</span>
<div class="ul"></div>
<span class="t" style="left:33.94px;top:63.04px;font-size:7.60px;line-height:9.12px;font-weight:700;color:#404040;letter-spacing:0.600px;transform:scaleX(0.8496);">REFRESH</span>
<span class="t" style="left:96.94px;top:63.04px;font-size:7.60px;line-height:9.12px;font-weight:700;color:#404040;letter-spacing:0.600px;transform:scaleX(0.9092);">PRINT</span>
<span class="t" style="left:149.04px;top:63.04px;font-size:7.60px;line-height:9.12px;font-weight:700;color:#404040;letter-spacing:0.600px;transform:scaleX(0.8632);">AUTO ARRANGE</span>
<span class="t" style="left:232.01px;top:63.28px;font-size:8.20px;line-height:9.84px;font-weight:400;color:#808080;letter-spacing:0.000px;transform:scaleX(0.9505);">Overview</span>
<span class="t" style="left:286.51px;top:63.28px;font-size:8.20px;line-height:9.84px;font-weight:400;color:#808080;letter-spacing:0.000px;transform:scaleX(0.9824);">Hindsight</span>
<span class="t" style="left:358.51px;top:63.28px;font-size:8.20px;line-height:9.84px;font-weight:400;color:#808080;letter-spacing:0.000px;transform:scaleX(0.9737);">Foresight</span>
<span class="t" style="left:452.21px;top:63.28px;font-size:8.20px;line-height:9.84px;font-weight:400;color:#808080;letter-spacing:0.000px;transform:scaleX(0.9928);">Show Comments</span>
<svg class="ic" style="left:21.300px;top:61.500px" width="12.500" height="12.500" viewBox="0 0 24 24"><path fill="#333" d="M17.65,6.35C16.2,4.9 14.21,4 12,4A8,8 0 0,0 4,12A8,8 0 0,0 12,20C15.73,20 18.84,17.45 19.73,14H17.65C16.83,16.33 14.61,18 12,18A6,6 0 0,1 6,12A6,6 0 0,1 12,6C13.66,6 15.14,6.69 16.22,7.78L13,11H20V4L17.65,6.35Z"/></svg>
<svg class="ic" style="left:84.400px;top:62.400px" width="11.800" height="11.800" viewBox="0 0 24 24"><path fill="#2b2b2b" d="M18,3H6V7H18M19,12A1,1 0 0,1 18,11A1,1 0 0,1 19,10A1,1 0 0,1 20,11A1,1 0 0,1 19,12M16,19H8V14H16M19,8H5A3,3 0 0,0 2,11V17H6V21H18V17H22V11A3,3 0 0,0 19,8Z"/></svg>
<svg class="ic" style="left:136.800px;top:62.300px" width="10" height="11" viewBox="0 0 22 24"><circle cx="11" cy="3.500" r="2.400" fill="none" stroke="#333" stroke-width="1.800"/><circle cx="3.500" cy="20" r="2.200" fill="none" stroke="#333" stroke-width="1.800"/><circle cx="11" cy="20" r="2.200" fill="none" stroke="#333" stroke-width="1.800"/><circle cx="18.500" cy="20" r="2.200" fill="none" stroke="#333" stroke-width="1.800"/><path d="M11 6v11.500M10 6.500L4 17.500M12 6.500l6 11" fill="none" stroke="#333" stroke-width="1.800"/></svg>
<div class="cb" style="left:218.10px;top:63.800px"></div>
<div class="cb" style="left:271.90px;top:63.800px"></div>
<div class="cb" style="left:344.30px;top:63.800px"></div>
<svg class="ic" style="left:324.20px;top:61.600px" width="7" height="7" viewBox="0 0 24 24"><circle cx="12" cy="12" r="10" fill="none" stroke="#606060" stroke-width="2.200"/><path d="M12 10.500v7M12 6v2.600" stroke="#606060" stroke-width="2.600"/></svg>
<svg class="ic" style="left:394.80px;top:61.600px" width="7" height="7" viewBox="0 0 24 24"><circle cx="12" cy="12" r="10" fill="none" stroke="#606060" stroke-width="2.200"/><path d="M12 10.500v7M12 6v2.600" stroke="#606060" stroke-width="2.600"/></svg>
<svg class="ic" style="left:415.200px;top:62px" width="12" height="11.500" viewBox="0 0 24 23"><path d="M14 2.500l3-2 5 5-2.500 3zM12.500 4L4 13l-2 7.500L9 18l9.500-8z" fill="#222"/><path d="M0 21.500h9" stroke="#222" stroke-width="2"/><circle cx="17.500" cy="17.500" r="4.300" fill="#fff" stroke="#222" stroke-width="1.800"/><path d="M14.500 20.500l6-6" stroke="#222" stroke-width="1.600"/></svg>
<div class="cbg" style="left:437.600px;top:63.400px"><svg width="9.400" height="9.400" viewBox="0 0 24 24"><path d="M5 12.500l4.800 4.800L19.500 7" fill="none" stroke="#fff" stroke-width="3.200"/></svg></div>
<div class="shadow"></div>
<div class="sbtrack"></div><div class="sbthumb"></div>
<svg class="ic" style="left:108px;top:84px" width="11" height="470" viewBox="0 0 11 470"><path d="M2.700 8.200L5.100 5l2.400 3.200z" fill="#858585"/><path d="M2.700 462.600L5.100 465.500l2.400-2.900z" fill="#444"/></svg>
<div class="bline"></div><div class="borange"></div><div class="hthumb"></div>
</body></html>
